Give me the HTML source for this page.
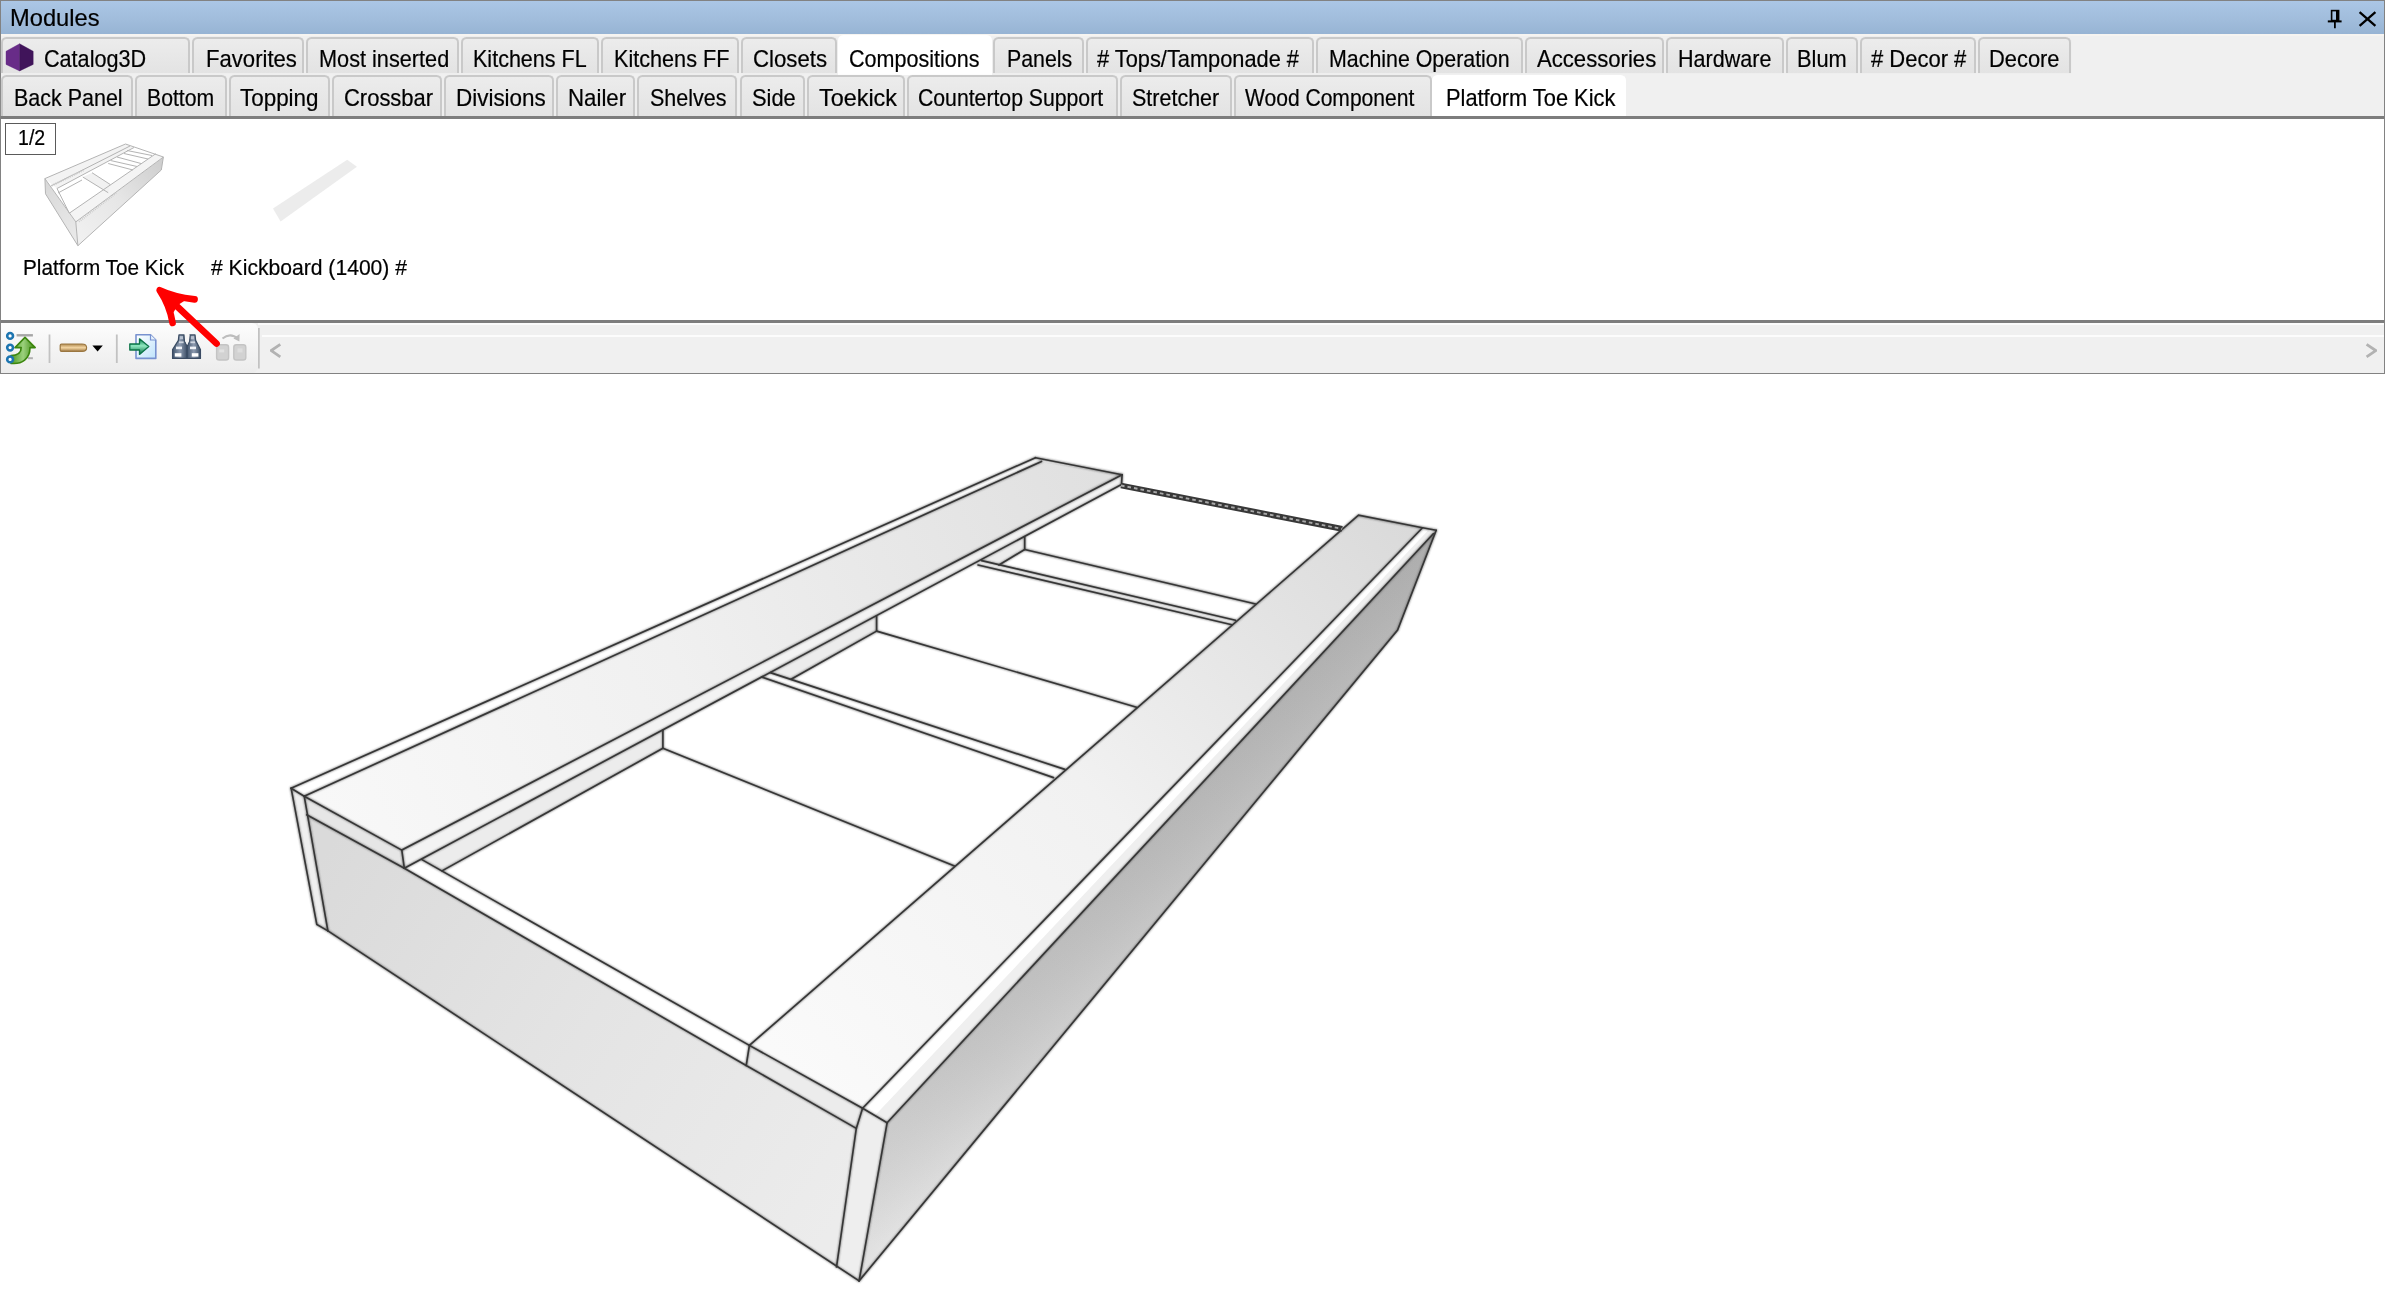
<!DOCTYPE html>
<html><head><meta charset="utf-8"><title>Modules</title>
<style>
html,body{margin:0;padding:0;background:#fff;}
body{width:2392px;height:1312px;position:relative;overflow:hidden;font-family:"Liberation Sans", sans-serif;font-size:24px;}
#panel{position:absolute;left:0;top:0;width:2385px;height:374px;background:#f0f0f0;box-sizing:border-box;border:1px solid #828282;}
#title{position:absolute;left:1px;top:1px;width:2383px;height:33px;background:linear-gradient(#abc6e5,#a0bcdb 60%,#97b4d4);}
#tl{position:absolute;left:1px;top:34px;width:2383px;height:1.5px;background:#f6f4f1;}
.tab{position:absolute;box-sizing:border-box;border:2px solid #c9c9c9;border-bottom:none;border-radius:5.5px 5.5px 0 0;background:linear-gradient(#ececec,#e3e3e3);box-shadow:0 0 1px #dcdcdc;}
.tab.sel{background:#fff;border-color:#fff;box-shadow:none;}
#sep1{position:absolute;left:1px;top:116px;width:2383px;height:2.6px;background:#7d7d7d;}
#content{position:absolute;left:1px;top:118.6px;width:2383px;height:201.4px;background:#fff;}
#sep2{position:absolute;left:1px;top:320px;width:2383px;height:2.6px;background:#7d7d7d;}
#tb{position:absolute;left:1px;top:322.6px;width:2383px;height:50.4px;background:#f0f0f0;}
#tbl{position:absolute;left:1px;top:323px;width:257px;height:50px;background:linear-gradient(#fdfdfd,#f4f4f4 50%,#ececec);border-radius:0 6px 6px 0;}
#tbw1{position:absolute;left:258px;top:323px;width:2126px;height:2px;background:#fbfbfb;}
#tbw2{position:absolute;left:262px;top:334.5px;width:2122px;height:2px;background:#fcfcfc;}
#count{position:absolute;left:5px;top:123px;width:51px;height:32px;box-sizing:border-box;border:1.5px solid #5a5a5a;background:#fff;}
svg{position:absolute;left:0;top:0;}
</style></head><body>
<div id="panel"></div>
<div id="title"></div><div id="tl"></div>
<span style="position:absolute;left:9.5px;top:4.2px;font-size:24px;line-height:28px;white-space:pre;color:#000;-webkit-text-stroke:0.22px #000;transform:scaleX(0.9866);transform-origin:0 0;">Modules</span>
<div class="tab" style="left:1.0px;top:37.3px;width:189.0px;height:35.7px"></div><span style="position:absolute;left:43.6px;top:44.5px;font-size:24px;line-height:28px;white-space:pre;color:#000;-webkit-text-stroke:0.22px #000;transform:scaleX(0.9003);transform-origin:0 0;">Catalog3D</span><div class="tab" style="left:192.0px;top:37.3px;width:112.0px;height:35.7px"></div><span style="position:absolute;left:205.5px;top:44.5px;font-size:24px;line-height:28px;white-space:pre;color:#000;-webkit-text-stroke:0.22px #000;transform:scaleX(0.9209);transform-origin:0 0;">Favorites</span><div class="tab" style="left:306.0px;top:37.3px;width:153.0px;height:35.7px"></div><span style="position:absolute;left:318.8px;top:44.5px;font-size:24px;line-height:28px;white-space:pre;color:#000;-webkit-text-stroke:0.22px #000;transform:scaleX(0.9038);transform-origin:0 0;">Most inserted</span><div class="tab" style="left:461.0px;top:37.3px;width:137.5px;height:35.7px"></div><span style="position:absolute;left:473.0px;top:44.5px;font-size:24px;line-height:28px;white-space:pre;color:#000;-webkit-text-stroke:0.22px #000;transform:scaleX(0.8972);transform-origin:0 0;">Kitchens FL</span><div class="tab" style="left:600.5px;top:37.3px;width:138.5px;height:35.7px"></div><span style="position:absolute;left:613.6px;top:44.5px;font-size:24px;line-height:28px;white-space:pre;color:#000;-webkit-text-stroke:0.22px #000;transform:scaleX(0.9012);transform-origin:0 0;">Kitchens FF</span><div class="tab" style="left:741.0px;top:37.3px;width:96.0px;height:35.7px"></div><span style="position:absolute;left:752.8px;top:44.5px;font-size:24px;line-height:28px;white-space:pre;color:#000;-webkit-text-stroke:0.22px #000;transform:scaleX(0.9246);transform-origin:0 0;">Closets</span><div class="tab sel" style="left:838.0px;top:35.3px;width:153.5px;height:39.7px"></div><span style="position:absolute;left:849.4px;top:44.5px;font-size:24px;line-height:28px;white-space:pre;color:#000;-webkit-text-stroke:0.22px #000;transform:scaleX(0.8968);transform-origin:0 0;">Compositions</span><div class="tab" style="left:993.0px;top:37.3px;width:91.0px;height:35.7px"></div><span style="position:absolute;left:1007.4px;top:44.5px;font-size:24px;line-height:28px;white-space:pre;color:#000;-webkit-text-stroke:0.22px #000;transform:scaleX(0.8884);transform-origin:0 0;">Panels</span><div class="tab" style="left:1086.0px;top:37.3px;width:228.0px;height:35.7px"></div><span style="position:absolute;left:1097.0px;top:44.5px;font-size:24px;line-height:28px;white-space:pre;color:#000;-webkit-text-stroke:0.22px #000;transform:scaleX(0.9083);transform-origin:0 0;"># Tops/Tamponade #</span><div class="tab" style="left:1316.0px;top:37.3px;width:207.0px;height:35.7px"></div><span style="position:absolute;left:1329.0px;top:44.5px;font-size:24px;line-height:28px;white-space:pre;color:#000;-webkit-text-stroke:0.22px #000;transform:scaleX(0.8906);transform-origin:0 0;">Machine Operation</span><div class="tab" style="left:1525.0px;top:37.3px;width:139.0px;height:35.7px"></div><span style="position:absolute;left:1537.2px;top:44.5px;font-size:24px;line-height:28px;white-space:pre;color:#000;-webkit-text-stroke:0.22px #000;transform:scaleX(0.9214);transform-origin:0 0;">Accessories</span><div class="tab" style="left:1666.0px;top:37.3px;width:117.5px;height:35.7px"></div><span style="position:absolute;left:1678.0px;top:44.5px;font-size:24px;line-height:28px;white-space:pre;color:#000;-webkit-text-stroke:0.22px #000;transform:scaleX(0.8977);transform-origin:0 0;">Hardware</span><div class="tab" style="left:1785.5px;top:37.3px;width:72.0px;height:35.7px"></div><span style="position:absolute;left:1797.0px;top:44.5px;font-size:24px;line-height:28px;white-space:pre;color:#000;-webkit-text-stroke:0.22px #000;transform:scaleX(0.9088);transform-origin:0 0;">Blum</span><div class="tab" style="left:1859.5px;top:37.3px;width:116.5px;height:35.7px"></div><span style="position:absolute;left:1871.0px;top:44.5px;font-size:24px;line-height:28px;white-space:pre;color:#000;-webkit-text-stroke:0.22px #000;transform:scaleX(0.9158);transform-origin:0 0;"># Decor #</span><div class="tab" style="left:1978.0px;top:37.3px;width:93.0px;height:35.7px"></div><span style="position:absolute;left:1989.4px;top:44.5px;font-size:24px;line-height:28px;white-space:pre;color:#000;-webkit-text-stroke:0.22px #000;transform:scaleX(0.9111);transform-origin:0 0;">Decore</span><div class="tab" style="left:1.0px;top:75.3px;width:132.0px;height:40.7px"></div><span style="position:absolute;left:14.0px;top:83.5px;font-size:24px;line-height:28px;white-space:pre;color:#000;-webkit-text-stroke:0.22px #000;transform:scaleX(0.8945);transform-origin:0 0;">Back Panel</span><div class="tab" style="left:135.0px;top:75.3px;width:91.5px;height:40.7px"></div><span style="position:absolute;left:146.5px;top:83.5px;font-size:24px;line-height:28px;white-space:pre;color:#000;-webkit-text-stroke:0.22px #000;transform:scaleX(0.8838);transform-origin:0 0;">Bottom</span><div class="tab" style="left:228.5px;top:75.3px;width:101.3px;height:40.7px"></div><span style="position:absolute;left:239.8px;top:83.5px;font-size:24px;line-height:28px;white-space:pre;color:#000;-webkit-text-stroke:0.22px #000;transform:scaleX(0.9337);transform-origin:0 0;">Topping</span><div class="tab" style="left:331.8px;top:75.3px;width:110.2px;height:40.7px"></div><span style="position:absolute;left:343.9px;top:83.5px;font-size:24px;line-height:28px;white-space:pre;color:#000;-webkit-text-stroke:0.22px #000;transform:scaleX(0.9152);transform-origin:0 0;">Crossbar</span><div class="tab" style="left:444.0px;top:75.3px;width:110.3px;height:40.7px"></div><span style="position:absolute;left:456.0px;top:83.5px;font-size:24px;line-height:28px;white-space:pre;color:#000;-webkit-text-stroke:0.22px #000;transform:scaleX(0.9351);transform-origin:0 0;">Divisions</span><div class="tab" style="left:556.3px;top:75.3px;width:78.9px;height:40.7px"></div><span style="position:absolute;left:567.5px;top:83.5px;font-size:24px;line-height:28px;white-space:pre;color:#000;-webkit-text-stroke:0.22px #000;transform:scaleX(0.9268);transform-origin:0 0;">Nailer</span><div class="tab" style="left:637.2px;top:75.3px;width:100.3px;height:40.7px"></div><span style="position:absolute;left:650.0px;top:83.5px;font-size:24px;line-height:28px;white-space:pre;color:#000;-webkit-text-stroke:0.22px #000;transform:scaleX(0.8959);transform-origin:0 0;">Shelves</span><div class="tab" style="left:739.5px;top:75.3px;width:65.7px;height:40.7px"></div><span style="position:absolute;left:751.6px;top:83.5px;font-size:24px;line-height:28px;white-space:pre;color:#000;-webkit-text-stroke:0.22px #000;transform:scaleX(0.9116);transform-origin:0 0;">Side</span><div class="tab" style="left:807.2px;top:75.3px;width:97.6px;height:40.7px"></div><span style="position:absolute;left:818.5px;top:83.5px;font-size:24px;line-height:28px;white-space:pre;color:#000;-webkit-text-stroke:0.22px #000;transform:scaleX(0.9746);transform-origin:0 0;">Toekick</span><div class="tab" style="left:906.8px;top:75.3px;width:211.2px;height:40.7px"></div><span style="position:absolute;left:918.1px;top:83.5px;font-size:24px;line-height:28px;white-space:pre;color:#000;-webkit-text-stroke:0.22px #000;transform:scaleX(0.8836);transform-origin:0 0;">Countertop Support</span><div class="tab" style="left:1120.0px;top:75.3px;width:111.5px;height:40.7px"></div><span style="position:absolute;left:1132.0px;top:83.5px;font-size:24px;line-height:28px;white-space:pre;color:#000;-webkit-text-stroke:0.22px #000;transform:scaleX(0.8955);transform-origin:0 0;">Stretcher</span><div class="tab" style="left:1233.5px;top:75.3px;width:198.0px;height:40.7px"></div><span style="position:absolute;left:1245.0px;top:83.5px;font-size:24px;line-height:28px;white-space:pre;color:#000;-webkit-text-stroke:0.22px #000;transform:scaleX(0.8771);transform-origin:0 0;">Wood Component</span><div class="tab sel" style="left:1432.0px;top:74.7px;width:194.0px;height:43.3px"></div><span style="position:absolute;left:1445.7px;top:83.5px;font-size:24px;line-height:28px;white-space:pre;color:#000;-webkit-text-stroke:0.22px #000;transform:scaleX(0.9088);transform-origin:0 0;">Platform Toe Kick</span>
<div id="content"></div>
<div id="sep1"></div>
<div id="count"></div>
<span style="position:absolute;left:18.3px;top:124.5px;font-size:22px;line-height:26px;white-space:pre;color:#000;-webkit-text-stroke:0.22px #000;transform:scaleX(0.8891);transform-origin:0 0;">1/2</span>
<span style="position:absolute;left:23.0px;top:255.0px;font-size:22px;line-height:26px;white-space:pre;color:#000;-webkit-text-stroke:0.22px #000;transform:scaleX(0.9428);transform-origin:0 0;">Platform Toe Kick</span>
<span style="position:absolute;left:211.0px;top:255.0px;font-size:22px;line-height:26px;white-space:pre;color:#000;-webkit-text-stroke:0.22px #000;transform:scaleX(0.9597);transform-origin:0 0;"># Kickboard (1400) #</span>
<div id="tb"></div><div id="tbw1"></div><div id="tbw2"></div><div id="tbl"></div>
<div id="sep2"></div>
<svg id="drawing" width="2392" height="1312" viewBox="0 0 2392 1312">
<defs>
<linearGradient id="gLP" gradientUnits="userSpaceOnUse" x1="330" y1="820" x2="1100" y2="480"><stop offset="0" stop-color="#f8f8f8"/><stop offset="0.45" stop-color="#f0f0f0"/><stop offset="1" stop-color="#e0e0e0"/></linearGradient>
<linearGradient id="gRP" gradientUnits="userSpaceOnUse" x1="800" y1="1080" x2="1400" y2="520"><stop offset="0" stop-color="#fafafa"/><stop offset="0.5" stop-color="#f1f1f1"/><stop offset="1" stop-color="#dadada"/></linearGradient>
<linearGradient id="gEF" gradientUnits="userSpaceOnUse" x1="320" y1="860" x2="850" y2="1200"><stop offset="0" stop-color="#dadada"/><stop offset="0.5" stop-color="#e4e4e4"/><stop offset="1" stop-color="#ececec"/></linearGradient>
<linearGradient id="gRF" gradientUnits="userSpaceOnUse" x1="880" y1="1250" x2="1420" y2="560"><stop offset="0" stop-color="#e2e2e2"/><stop offset="0.25" stop-color="#d2d2d2"/><stop offset="0.55" stop-color="#c6c6c6"/><stop offset="1" stop-color="#bbbbbb"/></linearGradient>
<linearGradient id="gRF2" gradientUnits="userSpaceOnUse" x1="1100" y1="900" x2="1160" y2="955"><stop offset="0" stop-color="#000" stop-opacity="0.07"/><stop offset="1" stop-color="#fff" stop-opacity="0.10"/></linearGradient>
</defs>
<polygon points="306.7,814.8 404.3,868.2 746.2,1065.5 856.3,1128.4 836.5,1267.0 327.9,930.9" fill="url(#gEF)"/>
<polygon points="291.1,788.2 304.2,796.2 327.9,930.9 316.8,924.4" fill="#efefef"/>
<polygon points="887.1,1122.8 1433.5,533.5 1436.2,530.3 1397.6,630.0 859.1,1280.9" fill="url(#gRF)"/>
<polygon points="887.1,1122.8 1433.5,533.5 1436.2,530.3 1397.6,630.0 859.1,1280.9" fill="url(#gRF2)"/>
<polygon points="862.6,1108.3 887.1,1122.8 859.1,1280.9 836.5,1267.0 856.3,1128.4" fill="#eeeeee"/>
<polygon points="304.2,796.2 1041.5,461.4 1122.1,474.7 401.8,850.1" fill="url(#gLP)"/>
<polygon points="304.2,796.2 401.8,850.1 404.3,868.2 306.7,814.8" fill="#e6e6e6"/>
<polygon points="401.8,850.1 1122.1,474.7 1121.5,484.5 404.3,868.2" fill="#f3f3f3"/>
<polygon points="422.0,858.7 662.9,730.2 662.9,748.3 442.0,870.9" fill="#ececec"/>
<polygon points="770.3,672.6 876.6,616.0 876.6,631.1 791.1,679.2" fill="#ececec"/>
<polygon points="981.6,560.6 1024.7,536.9 1024.7,549.5 998.9,565.0" fill="#ececec"/>
<polygon points="749.4,1045.4 1358.5,515.2 1422.5,527.8 862.6,1108.3" fill="url(#gRP)"/>
<polygon points="749.4,1045.4 862.6,1108.3 856.3,1128.4 746.2,1065.5" fill="#ececec"/>
<polygon points="874.9,1115.5 1428.0,530.6 1433.5,533.5 887.1,1122.8" fill="#efefef"/>
<filter id="lb" filterUnits="userSpaceOnUse" x="250" y="420" width="1250" height="890"><feGaussianBlur stdDeviation="1"/></filter>
<g filter="url(#lb)" stroke="#4a4a4a" stroke-width="1.9" stroke-linecap="round" fill="none" opacity="0.8"><polyline points="291.1,788.2 1035.5,457.7"/><polyline points="304.2,796.2 1041.5,461.4"/><polyline points="291.1,788.2 304.2,796.2"/><polyline points="1035.5,457.7 1122.1,474.7"/><polyline points="1122.1,474.7 1121.5,484.5"/><polyline points="291.1,788.2 316.8,924.4 327.9,930.9"/><polyline points="304.2,796.2 327.9,930.9"/><polyline points="327.9,930.9 859.1,1280.9"/><polyline points="304.2,796.2 401.8,850.1 1122.1,474.7"/><polyline points="306.7,814.8 404.3,868.2"/><polyline points="401.8,850.1 404.3,868.2"/><polyline points="404.3,868.2 1121.5,484.5"/><polyline points="404.3,868.2 746.2,1065.5"/><polyline points="421.9,859.6 749.4,1045.4"/><polyline points="442.0,870.9 662.9,748.3"/><polyline points="662.9,730.2 662.9,748.3"/><polyline points="662.9,748.3 954.5,866.0"/><polyline points="770.3,672.6 1064.8,769.4"/><polyline points="761.5,677.0 1053.5,777.6"/><polyline points="791.1,679.2 876.6,631.1"/><polyline points="876.6,616.0 876.6,631.1"/><polyline points="876.6,631.1 1136.5,707.2"/><polyline points="981.6,560.6 1235.5,620.3"/><polyline points="978.0,565.0 1231.8,624.7"/><polyline points="998.9,565.0 1024.7,549.5"/><polyline points="1024.7,536.9 1024.7,549.5"/><polyline points="1024.7,549.5 1255.7,604.0"/><polyline points="749.4,1045.4 1358.5,515.2 1422.5,527.8 1436.2,530.3"/><polyline points="862.6,1108.3 1422.5,527.8"/><polyline points="887.1,1122.8 1433.5,533.5"/><polyline points="749.4,1045.4 862.6,1108.3 887.1,1122.8"/><polyline points="749.4,1045.4 746.2,1065.5 856.3,1128.4"/><polyline points="862.6,1108.3 856.3,1128.4 836.5,1267.0"/><polyline points="887.1,1122.8 859.1,1280.9"/><polyline points="1436.2,530.3 1397.6,630.0 859.1,1280.9"/></g>
<g stroke="#363636" stroke-width="1.65" stroke-linecap="round" fill="none"><polyline points="291.1,788.2 1035.5,457.7"/><polyline points="304.2,796.2 1041.5,461.4"/><polyline points="291.1,788.2 304.2,796.2"/><polyline points="1035.5,457.7 1122.1,474.7"/><polyline points="1122.1,474.7 1121.5,484.5"/><polyline points="291.1,788.2 316.8,924.4 327.9,930.9"/><polyline points="304.2,796.2 327.9,930.9"/><polyline points="327.9,930.9 859.1,1280.9"/><polyline points="304.2,796.2 401.8,850.1 1122.1,474.7"/><polyline points="306.7,814.8 404.3,868.2"/><polyline points="401.8,850.1 404.3,868.2"/><polyline points="404.3,868.2 1121.5,484.5"/><polyline points="404.3,868.2 746.2,1065.5"/><polyline points="421.9,859.6 749.4,1045.4"/><polyline points="442.0,870.9 662.9,748.3"/><polyline points="662.9,730.2 662.9,748.3"/><polyline points="662.9,748.3 954.5,866.0"/><polyline points="770.3,672.6 1064.8,769.4"/><polyline points="761.5,677.0 1053.5,777.6"/><polyline points="791.1,679.2 876.6,631.1"/><polyline points="876.6,616.0 876.6,631.1"/><polyline points="876.6,631.1 1136.5,707.2"/><polyline points="981.6,560.6 1235.5,620.3"/><polyline points="978.0,565.0 1231.8,624.7"/><polyline points="998.9,565.0 1024.7,549.5"/><polyline points="1024.7,536.9 1024.7,549.5"/><polyline points="1024.7,549.5 1255.7,604.0"/><polyline points="749.4,1045.4 1358.5,515.2 1422.5,527.8 1436.2,530.3"/><polyline points="862.6,1108.3 1422.5,527.8"/><polyline points="887.1,1122.8 1433.5,533.5"/><polyline points="749.4,1045.4 862.6,1108.3 887.1,1122.8"/><polyline points="749.4,1045.4 746.2,1065.5 856.3,1128.4"/><polyline points="862.6,1108.3 856.3,1128.4 836.5,1267.0"/><polyline points="887.1,1122.8 859.1,1280.9"/><polyline points="1436.2,530.3 1397.6,630.0 859.1,1280.9"/></g>
<polyline points="1121.0,485.5 1342.2,528.9" stroke="#383838" stroke-width="5.8" fill="none"/>
<polyline points="1121.0,485.5 1342.2,528.9" stroke="#a8a8a8" stroke-width="1.9" stroke-dasharray="3.6 3" fill="none"/>
</svg>
<svg id="thumbs" width="2392" height="400" viewBox="0 0 2392 400">
<defs>
<linearGradient id="tE" gradientUnits="userSpaceOnUse" x1="45" y1="185" x2="78" y2="235"><stop offset="0" stop-color="#d9d9d9"/><stop offset="1" stop-color="#e9e9e9"/></linearGradient>
<linearGradient id="tR" gradientUnits="userSpaceOnUse" x1="78" y1="235" x2="162" y2="165"><stop offset="0" stop-color="#f0f0f0"/><stop offset="0.5" stop-color="#e6e6e6"/><stop offset="1" stop-color="#cfcfcf"/></linearGradient>
<filter id="tb" x="-5%" y="-5%" width="110%" height="110%"><feGaussianBlur stdDeviation="0.45"/></filter>
</defs>
<g filter="url(#tb)">
<polygon points="44.9,178.6 75.8,221.9 77.9,245.7 45.5,193.8" fill="url(#tE)"/>
<polygon points="75.8,221.9 163.4,157 161.3,170 77.9,245.7" fill="url(#tR)"/>
<polygon points="44.9,178.6 125.5,144 163.4,157 75.8,221.9" fill="#fff"/>
<polygon points="44.9,178.6 125.5,144 134,147.5 57,188.5" fill="#f3f3f3"/>
<polygon points="69.3,213.2 155.8,153.7 163.4,157 75.8,221.9" fill="#f4f4f4"/>
<polygon points="82.8,177 92,172.7 110.4,184.6 108.2,192.7" fill="#f1f1f1"/>
<g stroke="#b4b4b4" stroke-width="1" fill="none" stroke-linejoin="round">
<polygon points="44.9,178.6 125.5,144 163.4,157 75.8,221.9"/>
<polyline points="44.9,178.6 45.5,193.8 77.9,245.7 161.3,170 163.4,157"/>
<line x1="75.8" y1="221.9" x2="77.9" y2="245.7"/>
<line x1="57" y1="188.5" x2="134" y2="147.5"/>
<line x1="51" y1="186" x2="130" y2="146"/>
<line x1="69.3" y1="213.2" x2="155.8" y2="153.7"/>
<line x1="57" y1="188.5" x2="69.3" y2="213.2"/>
<line x1="58" y1="193" x2="82" y2="180"/>
<line x1="82.8" y1="177" x2="108.2" y2="192.7"/>
<line x1="92" y1="172.7" x2="110.4" y2="184.6"/>
<line x1="108.2" y1="163.5" x2="133" y2="170"/>
<line x1="110.5" y1="160.5" x2="137" y2="166.5"/>
<line x1="117" y1="157" x2="141" y2="163.5"/>
<line x1="124" y1="153.5" x2="148" y2="159"/>
<line x1="127" y1="150.5" x2="152" y2="155.5"/>
</g>
<g stroke="#c9c9c9" stroke-width="2.2" stroke-dasharray="0.8 1.2" fill="none">
<line x1="52" y1="185.5" x2="84" y2="170"/>
<line x1="79" y1="221.5" x2="116" y2="193"/>
</g>
</g>
<polygon points="273,208.4 347.2,159.7 356.9,166.7 280.6,221.4" fill="#ececec" filter="url(#tb)"/>
</svg>

<svg id="icons" width="2392" height="400" viewBox="0 0 2392 400">
<defs>
<linearGradient id="iPg" x1="0" y1="0" x2="1" y2="1"><stop offset="0" stop-color="#ffffff"/><stop offset="1" stop-color="#bfe3fb"/></linearGradient>
<linearGradient id="iGa" x1="0" y1="0" x2="0" y2="1"><stop offset="0" stop-color="#0b7f4f"/><stop offset="0.45" stop-color="#8fe8c0"/><stop offset="1" stop-color="#0a6e44"/></linearGradient>
<linearGradient id="iTan" x1="0" y1="0" x2="0" y2="1"><stop offset="0" stop-color="#b08a50"/><stop offset="0.5" stop-color="#f3d5a2"/><stop offset="1" stop-color="#a27c44"/></linearGradient>
<linearGradient id="iGr" x1="0" y1="0" x2="1" y2="0"><stop offset="0" stop-color="#4d9a22"/><stop offset="0.5" stop-color="#9bd17c"/><stop offset="1" stop-color="#3f8a14"/></linearGradient>
<linearGradient id="iBn" x1="0" y1="0" x2="1" y2="0"><stop offset="0" stop-color="#43566e"/><stop offset="0.5" stop-color="#8d9bb0"/><stop offset="1" stop-color="#3c4f66"/></linearGradient>
<filter id="ib" x="-10%" y="-10%" width="120%" height="120%"><feGaussianBlur stdDeviation="0.4"/></filter>
</defs>
<!-- Catalog3D hexagon -->
<polygon points="19.6,43.8 6,51.3 6,64.4 19.6,70.9" fill="#682c88" stroke="#682c88" stroke-width="0.4" stroke-linejoin="round"/>
<polygon points="19.6,43.8 33.2,51.3 33.2,64.4 19.6,70.9" fill="#40145a" stroke="#40145a" stroke-width="0.4" stroke-linejoin="round"/>
<!-- pin + close -->
<g stroke="#000" fill="none">
<rect x="2331.6" y="10.6" width="7" height="10" stroke-width="1.6"/>
<rect x="2336" y="10.6" width="2.6" height="10" fill="#000" stroke="none"/>
<line x1="2327.8" y1="21.4" x2="2341.6" y2="21.4" stroke-width="2"/>
<line x1="2334.9" y1="21.4" x2="2334.9" y2="28.3" stroke-width="1.8"/>
<path d="M2359.6,12.2 L2375.4,25.8 M2375.4,12.2 L2359.6,25.8" stroke-width="2.3"/>
</g>
<g filter="url(#ib)">
<!-- icon 1: tree + green arrow -->
<line x1="16.6" y1="335.3" x2="32.9" y2="335.3" stroke="#a6a6a6" stroke-width="2.4"/>
<line x1="28" y1="358.2" x2="32.9" y2="358.2" stroke="#b0b0b0" stroke-width="2"/>
<path d="M11,363.4 C22,364.6 30,359 30,347.6 L35.2,347.6 L25,337.4 L15,347.6 L21.2,347.6 C21.2,352.6 18,355.6 11,355.6 Z" fill="url(#iGr)" stroke="#3b8610" stroke-width="1.6" stroke-linejoin="round"/>
<g fill="#fff" stroke="#1d74b0" stroke-width="2.6">
<circle cx="10.1" cy="335.9" r="2.9"/><circle cx="10.1" cy="347.6" r="2.9"/><circle cx="10.1" cy="359.4" r="2.9"/>
</g>
<!-- separators -->
<line x1="49.5" y1="334.5" x2="49.5" y2="363" stroke="#c2c2c2" stroke-width="1.8"/>
<line x1="116.8" y1="334.5" x2="116.8" y2="363" stroke="#c2c2c2" stroke-width="1.8"/>
<!-- icon 2: tan bar + dropdown -->
<path d="M61.5,344 L82,344 Q86.6,344 86.6,347.7 Q86.6,351.4 82,351.4 L61.5,351.4 Q60.2,351.4 60.2,350 L60.2,345.4 Q60.2,344 61.5,344 Z" fill="url(#iTan)" stroke="#9a7640" stroke-width="1.2"/>
<polygon points="92.4,345.4 102.8,345.4 97.6,351.6" fill="#000"/>
<!-- icon 3: page + arrow -->
<path d="M136,334.8 L150.5,334.8 L155.8,340 L155.8,358.4 L136,358.4 Z" fill="url(#iPg)" stroke="#7892d0" stroke-width="1.6" stroke-linejoin="round"/>
<path d="M150.5,334.8 L150.5,340 L155.8,340" fill="#e8f2fc" stroke="#7892d0" stroke-width="1.2"/>
<path d="M129.8,344 L139.5,344 L139.5,338.8 L148.8,346.6 L139.5,354.4 L139.5,350 L129.8,350 Z" fill="url(#iGa)" stroke="#0a7347" stroke-width="1.3" stroke-linejoin="round"/>
<!-- icon 4: binoculars -->
<g fill="url(#iBn)" stroke="#3a4c63" stroke-width="1.3" stroke-linejoin="round">
<path d="M179,334.9 L184,334.9 L184.4,340.4 L187.2,346.5 L187.2,358.4 L172.6,358.4 L172.6,349.5 L178.4,340.4 Z"/>
<path d="M190,334.9 L195,334.9 L195.6,340.4 L200.4,349.5 L200.4,358.4 L187.2,358.4 L187.2,346.5 L189.6,340.4 Z"/>
</g>
<polygon points="184.9,335 189.5,335 189,341 187.2,345 185,341" fill="#f6f6f6"/>
<rect x="174.8" y="353.2" width="6.6" height="3.4" fill="#fff"/><rect x="191.8" y="353.2" width="6.6" height="3.4" fill="#fff"/>
<rect x="176" y="346.6" width="6" height="2.6" fill="#eef1f6"/><rect x="190" y="346.6" width="6" height="2.6" fill="#eef1f6"/>
<rect x="179.8" y="336.2" width="3.2" height="3" fill="#b7c1cf"/><rect x="190.9" y="336.2" width="3.2" height="3" fill="#b7c1cf"/>
<rect x="179" y="341.4" width="4.6" height="1.8" fill="#cfd6e0"/><rect x="190.4" y="341.4" width="4.6" height="1.8" fill="#cfd6e0"/>
<!-- icon 5: disabled -->
<rect x="216.6" y="344.8" width="12" height="15.2" rx="2.6" fill="#d2d2d2" stroke="#c4c4c4" stroke-width="1.4"/>
<rect x="233.8" y="344.8" width="12" height="15.2" rx="2.6" fill="#d2d2d2" stroke="#c4c4c4" stroke-width="1.4"/>
<rect x="219.2" y="349.4" width="5" height="3" fill="#e2e2e2"/><rect x="237.5" y="348.4" width="5" height="4" fill="#dedede"/>
<path d="M222.5,338.6 Q230,332 238.2,338.8" fill="none" stroke="#bdbdbd" stroke-width="2"/>
<polygon points="239.6,334 239.4,341.4 233.4,338.6" fill="#bdbdbd"/>
</g>
<!-- toolbar end separator -->
<line x1="258.9" y1="328" x2="258.9" y2="368.5" stroke="#bdbdbd" stroke-width="1.6"/>
<!-- scroll chevrons -->
<polyline points="280.3,344.4 271.2,350.6 280.3,356.8" fill="none" stroke="#b2b2b2" stroke-width="2.8" filter="url(#ib)"/>
<polyline points="2366.6,344.4 2375.8,350.6 2366.6,356.8" fill="none" stroke="#b2b2b2" stroke-width="2.8" filter="url(#ib)"/>
<!-- red arrow -->
<g stroke="#ff0000" fill="none" stroke-linecap="round" stroke-linejoin="round">
<path d="M194.6,299.4 Q174,297 159.6,290.2 Q170,306 172.6,323" stroke-width="6.6"/>
<line x1="165" y1="295" x2="216.6" y2="343.6" stroke-width="6.6"/>
<polygon points="159.6,290.2 186,298.6 177,304.5 171.4,314" fill="#ff0000" stroke-width="2"/>
</g>
</svg>

</body></html>
